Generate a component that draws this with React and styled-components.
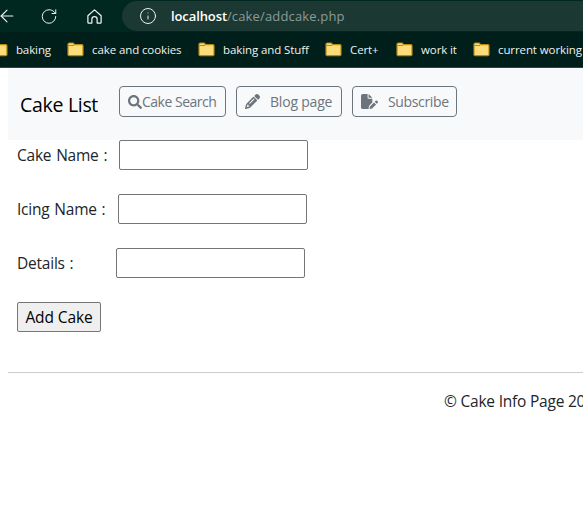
import React from "react";
import styled, { createGlobalStyle } from "styled-components";
import { ArrowLeft, RotateCw, Info } from "lucide-react";
import { FaSearch } from "react-icons/fa";
import { FaPencil, FaFilePen } from "react-icons/fa6";

const Global = createGlobalStyle`
  html, body { margin: 0; padding: 0; background: #fff; overflow: hidden; }
  body { font-family: "Open Sans", "Noto Sans", "Liberation Sans", sans-serif; width: 583px; height: 519px; }
`;
const Shell = styled.div`width: 583px; height: 519px; overflow: hidden; background: #fff;`;
const Chrome = styled.header`background: #001f1a; height: 68px; box-sizing: border-box; border-bottom: 1px solid #2c4641; overflow: hidden;`;
const Toolbar = styled.div`height: 32px; display: flex; align-items: center; color: #f2f5f4; background: #012721;`;
const IconSlot = styled.span`display: flex; width: ${p => p.$w}px; margin-left: ${p => p.$ml || 0}px; flex: none;`;
const Omnibox = styled.div`
  margin-left: 18px; flex: 1; height: 30px; margin-right: -40px; border-radius: 15px 0 0 15px; background: #1c3833;
  display: flex; align-items: center; padding-left: 17px; font-size: 13px; white-space: nowrap;
`;
const Host = styled.span`color: #fff; margin-left: 14px; font-weight: 600; letter-spacing: -0.1px;`;
const Path = styled.span`color: #8c9b98; letter-spacing: 0.15px;`;
const Bookmarks = styled.div`
  height: 34px; display: flex; align-items: center; margin-left: -9px; gap: 16px; white-space: nowrap;
  color: #eef2f0; font-size: 11.5px; letter-spacing: -0.1px;
`;
const Bookmark = styled.span`display: flex; align-items: center; gap: 8px; flex: none; width: ${p => p.$w}px;`;
const FolderIcon = () => (
  <svg width="17" height="15" viewBox="0 0 17 15">
    <path d="M1 2.200C1 1.500 1.500 1 2.200 1h4l1.500 1.600h7c.8 0 1.300.5 1.300 1.200v8.700c0 .7-.5 1.200-1.300 1.200H2.200C1.500 13.700 1 13.200 1 12.500z" fill="#fddc7c" stroke="#b8890f" strokeWidth="1.200" />
    <path d="M1.500 3.500h5.500" stroke="#b8890f" strokeWidth="1" fill="none" />
  </svg>
);
const Page = styled.main`padding: 0 0 0 8px; color: #212529; font-size: 15.5px; letter-spacing: -0.22px;`;
const Navbar = styled.nav`
  background: #f8f9fa; height: 72px; width: 600px; display: flex; align-items: flex-start; padding: 18px 0 0 12px; box-sizing: border-box;
`;
const Brand = styled.span`font-size: 19.5px; line-height: 38px; color: #000; width: 99px; flex: none; letter-spacing: -0.3px;`;
const NavButton = styled.a`
  height: 31px; width: ${p => p.$w}px; box-sizing: border-box; border: 1px solid #6c757d; border-radius: 4px; color: #6c757d; display: flex; align-items: center;
  padding-left: ${p => p.$pl}px; margin-right: 10px; font-size: 14px; gap: ${p => p.$gap}px; flex: none; letter-spacing: ${p => p.$ls}px; white-space: nowrap;
`;
const Form = styled.form`display: flex; flex-direction: column; padding-left: 9px;`;
const Row = styled.div`display: flex; align-items: flex-start; height: 30px; margin-bottom: 24px;`;
const Label = styled.label`width: ${p => p.$w}px; flex: none; line-height: 30px; word-spacing: 1px;`;
const Input = styled.input`
  width: 189px; height: 30px; box-sizing: border-box; border: 1px solid #767676; border-radius: 2px; background: #fff; padding: 0;
`;
const Submit = styled.button`
  width: 84px; height: 30px; box-sizing: border-box; padding: 0; border: 1px solid #767676; border-radius: 2px; background: #efefef; color: #000;
  font: inherit; letter-spacing: -0.1px;
`;
const Rule = styled.hr`margin: 40px 0 0; border: 0; border-top: 1px solid #ccc; width: 580px;`;
const Footer = styled.footer`padding: 18px 0 0 436px; line-height: 20px; white-space: nowrap;`;

export default function App() {
  return (
    <Shell>
      <Global />
      <Chrome>
        <Toolbar>
          <IconSlot $w={20} $ml={-3}><ArrowLeft size={20} strokeWidth={1.3} /></IconSlot>
          <IconSlot $w={18} $ml={23}><RotateCw size={19} strokeWidth={1.3} /></IconSlot>
          <IconSlot $w={18} $ml={28}>
            <svg width="17" height="17" viewBox="0 0 18 18" fill="none" stroke="currentColor" strokeWidth="1.300" strokeLinejoin="round">
              <path d="M2 8.200 9 2l7 6.200V15a1 1 0 0 1-1 1h-3.200v-4a2.800 2.800 0 0 0-5.600 0v4H3a1 1 0 0 1-1-1z" />
            </svg>
          </IconSlot>
          <Omnibox>
            <Info size={18} strokeWidth={1.3} />
            <Host>localhost</Host><Path>/cake/addcake.php</Path>
          </Omnibox>
        </Toolbar>
        <Bookmarks>
          <Bookmark $w={60}><FolderIcon />baking</Bookmark>
          <Bookmark $w={115}><FolderIcon />cake and cookies</Bookmark>
          <Bookmark $w={111}><FolderIcon />baking and Stuff</Bookmark>
          <Bookmark $w={55}><FolderIcon />Cert+</Bookmark>
          <Bookmark $w={61}><FolderIcon />work it</Bookmark>
          <Bookmark $w={110}><FolderIcon />current working</Bookmark>
        </Bookmarks>
      </Chrome>
      <Page>
        <Navbar>
          <Brand>Cake List</Brand>
          <NavButton $w={107} $pl={8} $gap={0} $ls={-0.5}><FaSearch size={14} />Cake Search</NavButton>
          <NavButton $w={106} $pl={8} $gap={10} $ls={-0.2}><FaPencil size={15} />Blog page</NavButton>
          <NavButton $w={105} $pl={8} $gap={10} $ls={-0.35}><FaFilePen size={17} />Subscribe</NavButton>
        </Navbar>
        <Form>
          <Row><Label $w={102}>Cake Name :</Label><Input /></Row>
          <Row><Label $w={101}>Icing Name :</Label><Input /></Row>
          <Row><Label $w={99}>Details :</Label><Input /></Row>
          <div><Submit type="button">Add Cake</Submit></div>
        </Form>
        <Rule />
        <Footer>© Cake Info Page 2023</Footer>
      </Page>
    </Shell>
  );
}
